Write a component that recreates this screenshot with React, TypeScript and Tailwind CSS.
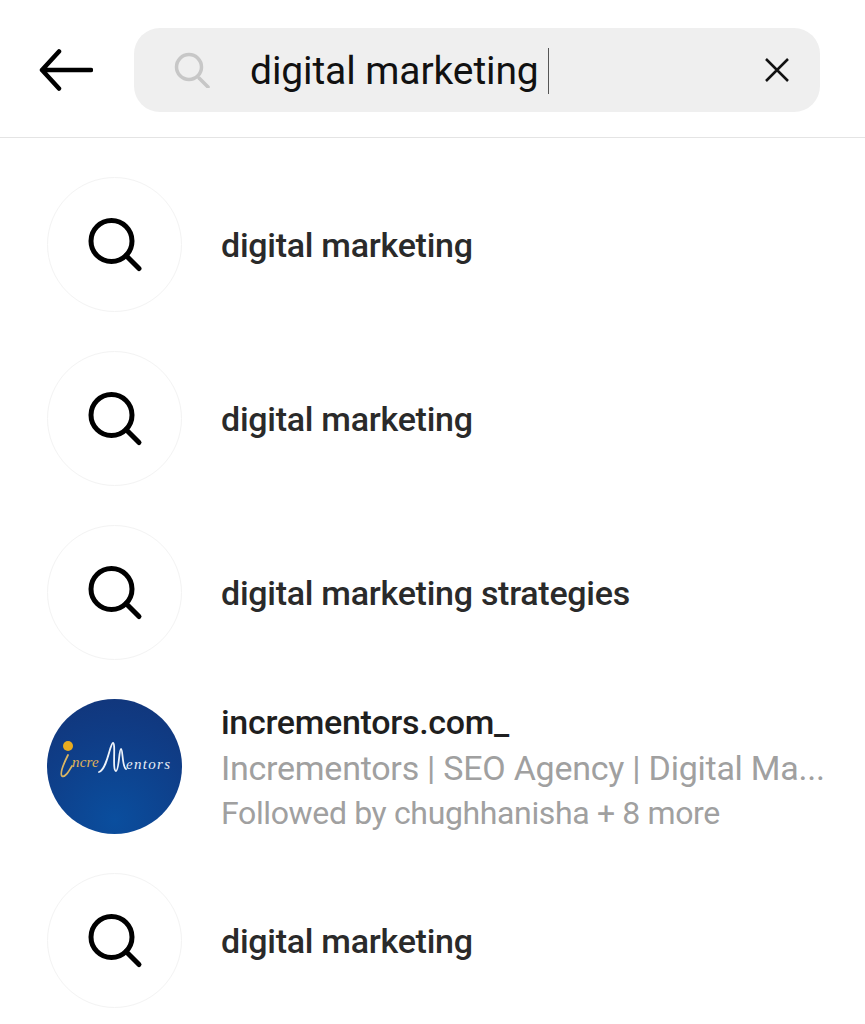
const SearchGlyph = () => (
    <svg width="56" height="56" viewBox="0 0 56 56" fill="none" stroke="#000" strokeWidth="5" strokeLinecap="round">
        <circle cx="24.5" cy="24" r="20.5" />
        <path d="M39 38.5L52 51.5" />
    </svg>
);

const SuggestionRow = ({ text }: { text: string }) => (
    <div className="flex h-[135px] items-center">
        <div className="flex h-[135px] w-[135px] shrink-0 items-center justify-center rounded-full border border-[#f3f3f3]">
            <SearchGlyph />
        </div>
        <span className="ml-[39px] pt-[2px] text-[34px] font-medium tracking-[-0.27px] text-[#2a2a2a]">{text}</span>
    </div>
);

const LogoAvatar = () => (
    <div className="relative h-[135px] w-[135px] shrink-0 overflow-hidden rounded-full bg-[radial-gradient(circle_at_50%_90%,#0a4e9e,#0f3d87_60%,#123478)]">
        <svg className="absolute left-0 top-0" width="135" height="135" viewBox="0 0 135 135" fill="none" strokeLinecap="round">
            <circle cx="21" cy="47" r="5" fill="#e9ac1f" />
            <path d="M21 56C18 62 12 74 15 77C18 79 22 72 25 67" stroke="#d9b564" strokeWidth="1.8" />
            <path d="M52 73C60 71 63 44 66 44C69 44 65 72 69 72C72 72 72 50 74 50C76 50 75 68 79 70" stroke="#eef3fa" strokeWidth="1.8" />
        </svg>
        <span className="absolute left-[25px] top-[56px] font-['Liberation_Serif',serif] text-[15px] italic leading-none tracking-[0.2px] text-[#e0b558]">ncre</span>
        <span className="absolute left-[79px] top-[58px] font-['Liberation_Serif',serif] text-[15px] italic leading-none tracking-[1.3px] text-[#e8eef7]">entors</span>
    </div>
);

export default function App() {
    return (
        <div className="h-[1024px] w-[865px] overflow-hidden bg-white font-['Roboto',sans-serif]">
            <header className="flex h-[138px] items-start border-b border-[#e4e4e4] pl-[39px] pt-[28px]">
                <div className="flex h-[84px] items-center">
                    <svg width="54" height="42" viewBox="0 0 54 42" fill="none" stroke="#000" strokeWidth="4.5" strokeLinecap="round" strokeLinejoin="round">
                        <path d="M52 21H3M20 2.5L3 21L20 39.5" />
                    </svg>
                </div>
                <div className="ml-[41px] flex h-[84px] w-[686px] items-center rounded-[26px] bg-[#efefef] pl-[40px]">
                    <svg width="36" height="36" viewBox="0 0 36 36" fill="none" stroke="#c7c7c7" strokeWidth="3.5" strokeLinecap="round">
                        <circle cx="15" cy="15" r="12.5" />
                        <path d="M25 26L34 35" />
                    </svg>
                    <span className="ml-[40px] pt-[2px] text-[39px] tracking-[-0.1px] text-[#111]">digital marketing</span>
                    <span className="ml-[9px] mt-[2px] h-[46px] w-px bg-[#555]" />
                    <svg className="ml-auto mr-[30px]" width="26" height="26" viewBox="0 0 26 26" fill="none" stroke="#111" strokeWidth="2.5">
                        <path d="M2 2L24 24M24 2L2 24" />
                    </svg>
                </div>
            </header>
            <main className="flex flex-col gap-[39px] pl-[47px] pt-[39px]">
                <SuggestionRow text="digital marketing" />
                <SuggestionRow text="digital marketing" />
                <SuggestionRow text="digital marketing strategies" />
                <div className="flex h-[135px] items-center">
                    <LogoAvatar />
                    <div className="ml-[39px] flex flex-col pt-[1px]">
                        <span className="text-[34px] font-medium leading-[46px] tracking-[-0.3px] text-[#1f1f1f]">incrementors.com_</span>
                        <span className="text-[34px] leading-[46px] tracking-[-0.25px] text-[#a0a0a0]">Incrementors | SEO Agency | Digital Ma...</span>
                        <span className="text-[32px] leading-[44px] tracking-[-0.36px] text-[#a0a0a0]">Followed by chughhanisha + 8 more</span>
                    </div>
                </div>
                <SuggestionRow text="digital marketing" />
            </main>
        </div>
    );
}
